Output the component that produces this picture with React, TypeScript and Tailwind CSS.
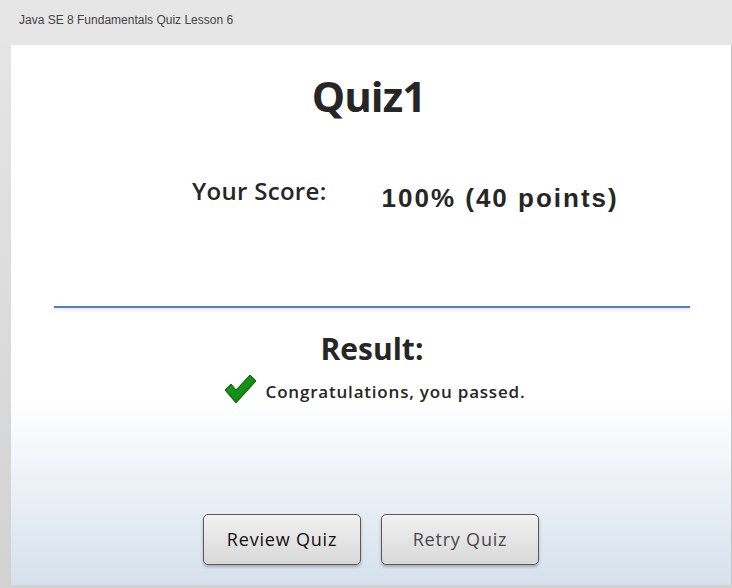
import React from "react";

function Check() {
  return (
    <svg width="34" height="32" viewBox="0 0 34 32">
      <path
        d="M2 17 L8 11 L13 17 L27 2 L33 8 L13 30 Z"
        fill="#118a11"
        stroke="#0a5e0a"
        strokeWidth="1"
        strokeLinejoin="round"
      />
      <path d="M4 17 L8 13 L13 19 L27 4 L30 7 L13 26 Z" fill="#1a9a1a" opacity="0.6" />
    </svg>
  );
}

export default function App() {
  return (
    <div className="w-[732px] h-[588px] flex flex-col bg-gradient-to-b from-[#e6e6e6] to-[#d2d2d2] overflow-hidden">
      <div className="h-[45px] shrink-0 bg-[#e6e6e6] pl-[19px] pt-[11px] text-[12px] text-[#444] font-['Liberation_Sans',Arial,sans-serif]">
        Java SE 8 Fundamentals Quiz Lesson 6
      </div>
      <div className="flex-1 flex pl-[11px] pb-[3px]">
        <div className="flex-1 flex flex-col items-center border-r border-[#c4c4c4] bg-[linear-gradient(to_bottom,#ffffff_0%,#ffffff_66%,#f3f6fa_76%,#d5e1ed_100%)] font-['Open_Sans',sans-serif] text-[#262626]">
          <div className="mt-[23px] text-[42px] leading-[56px] font-bold tracking-[-1px] mr-[5px]">Quiz1</div>
          <div className="mt-[52px] flex items-start w-full pl-[181px]">
            <div className="text-[24px] leading-[30px] font-semibold tracking-[0.3px]">Your Score:</div>
            <div
              className="ml-[55px] mt-[7px] text-[26px] leading-[30px] font-bold tracking-[2px]"
              style={{ fontFamily: '"Liberation Sans", Arial, sans-serif' }}
            >
              100% (40 points)
            </div>
          </div>
          <div className="mt-[93px] w-[636px] h-[2px] bg-[#4a7fc9] shadow-[0_2px_3px_rgba(0,0,0,0.12)] ml-[1px]" />
          <div className="mt-[21px] text-[30px] leading-[40px] font-bold pl-[2px]">Result:</div>
          <div className="mt-[4px] flex items-center pl-[6px]">
            <Check />
            <div className="ml-[9px] mt-[6px] text-[17px] font-semibold tracking-[0.8px]">Congratulations, you passed.</div>
          </div>
          <div className="mt-[109px] flex gap-[20px]">
            <button className="w-[158px] h-[51px] rounded-[5px] border border-[#5a5a5a] bg-gradient-to-b from-[#f1f1f1] to-[#d9d9d9] shadow-[0_2px_3px_rgba(0,0,0,0.25)] text-[18px] text-[#111] tracking-[0.8px]">
              Review Quiz
            </button>
            <button className="w-[158px] h-[51px] rounded-[5px] border border-[#5a5a5a] bg-gradient-to-b from-[#f1f1f1] to-[#d9d9d9] shadow-[0_2px_3px_rgba(0,0,0,0.25)] text-[18px] text-[#4a4a4a] tracking-[0.8px]">
              Retry Quiz
            </button>
          </div>
        </div>
      </div>
    </div>
  );
}
